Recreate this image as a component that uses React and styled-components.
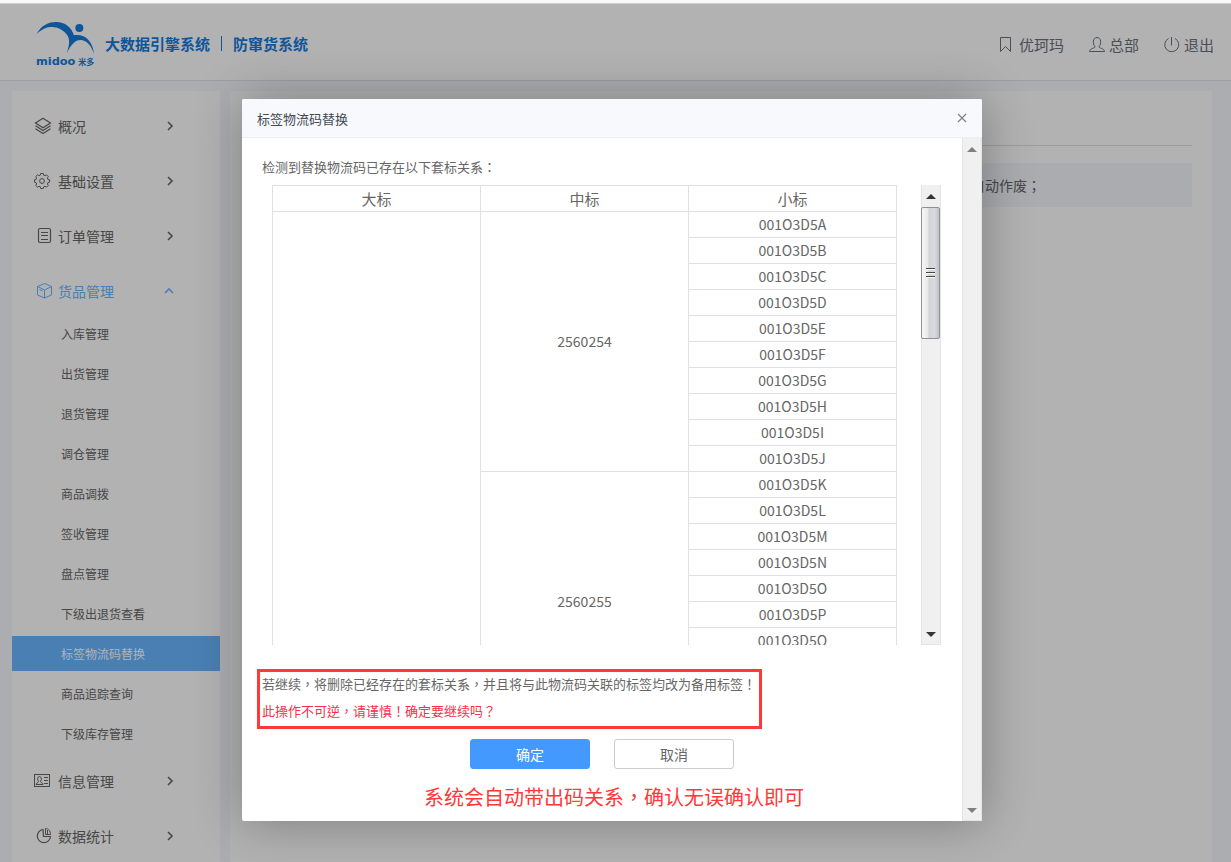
import React, { useState } from 'react';
import styled, { createGlobalStyle } from 'styled-components';

const colors = {
  text: '#666',
  dark: '#444b55',
  line: '#dde1e6',
  page: '#f6f8fd',
  blue: '#4499ff',
  active: '#69b6ff',
  brand: '#157add',
  red: '#ff3838'
};

const GlobalStyle = createGlobalStyle`
  * {
    box-sizing: border-box;
  }
  body {
    margin: 0;
    color: ${colors.text};
    font-family: 'Noto Sans CJK SC', sans-serif;
    font-size: 14px;
  }
  button {
    padding: 0;
    border: 0;
    background: none;
    color: inherit;
    font: inherit;
    cursor: pointer;
  }
  a {
    color: inherit;
    text-decoration: none;
  }
  ul {
    margin: 0;
    padding: 0;
    list-style: none;
  }
  p {
    margin: 0;
  }
  svg {
    display: block;
  }
`;

const Page = styled.div`
  display: flex;
  flex-direction: column;
  min-height: 100vh;
  background: #f8f8f8;
`;

const TopStrip = styled.div`
  height: 4px;
  border-bottom: 1px solid #cfcfcf;
`;

const Stage = styled.div`
  position: relative;
  display: flex;
  flex: 1;
  flex-direction: column;
  overflow: hidden;
  background: ${colors.page};
`;

const Header = styled.header`
  display: flex;
  align-items: center;
  height: 77px;
  padding: 3px 17px 0 36px;
  border-bottom: 1px solid #dfe1e6;
  background: #fff;
`;

const Brand = styled.h1`
  display: flex;
  align-items: center;
  gap: 10px;
  margin: 0;
  color: ${colors.brand};
  font-size: 15px;
  font-weight: 700;
  line-height: 20px;
`;

const BrandDivider = styled.span`
  width: 1px;
  height: 15px;
  margin: 0 1px;
  background: ${colors.brand};
`;

const UserNav = styled.nav`
  display: flex;
  gap: 24px;
  margin-left: auto;
  padding-top: 2px;
  color: #6b727c;
  font-size: 15px;
`;

const UserLink = styled.a`
  display: flex;
  align-items: center;
  gap: ${props => props.$gap}px;
  line-height: 24px;
`;

const Columns = styled.div`
  display: flex;
  flex: 1;
  gap: 10px;
  padding: 10px 19px 0 12px;
`;

const Sidebar = styled.nav`
  flex: 0 0 208px;
  padding-top: 17px;
  background: #fff;
`;

const Group = styled.li`
  padding-bottom: ${props => (props.$open ? 12 : 20)}px;

  &:last-child {
    padding-bottom: 0;
  }
`;

const GroupButton = styled.button`
  display: flex;
  align-items: center;
  width: 100%;
  height: 35px;
  padding: 0 46px 0 22px;
  color: ${props => (props.$open ? colors.active : colors.text)};
  text-align: left;

  > span {
    flex: 1;
    margin-left: 6px;
  }
`;

const SubList = styled.ul`
  display: flex;
  flex-direction: column;
  gap: 5px;
  padding-top: 8px;
`;

const SubLink = styled.a`
  display: block;
  padding-left: 49px;
  background: ${props => (props.$current ? colors.active : 'transparent')};
  color: ${props => (props.$current ? '#fff' : colors.text)};
  font-size: 12px;
  line-height: 35px;
`;

const Panel = styled.main`
  flex: 1;
  min-width: 0;
  padding: 0 20px;
  background: #fff;
`;

const PanelHead = styled.div`
  height: 55px;
  border-bottom: 1px solid ${colors.line};
`;

const Notice = styled.p`
  margin-top: 17px;
  padding-right: 151px;
  background: #f5f7fd;
  font-family: 'Noto Sans CJK TC', sans-serif;
  line-height: 44px;
  text-align: right;
`;

const Overlay = styled.div`
  position: absolute;
  inset: 0;
  display: flex;
  align-items: flex-start;
  justify-content: center;
  padding: 95px 7px 0 0;
  background: rgba(0, 0, 0, 0.3);
`;

const Dialog = styled.section`
  width: 740px;
  max-width: 100%;
  border-radius: 2px;
  background: #fff;
  box-shadow: 1px 1px 50px rgba(0, 0, 0, 0.3);
`;

const DialogHeader = styled.header`
  display: flex;
  align-items: center;
  justify-content: space-between;
  height: 39px;
  padding: 0 15px;
  border-bottom: 1px solid #eceef2;
  border-radius: 2px 2px 0 0;
  background: #f7f9fd;
  color: ${colors.dark};
`;

const DialogTitle = styled.h2`
  margin: 0;
  font-size: 13px;
  font-weight: 400;
`;

const DialogBody = styled.div`
  display: flex;
`;

const DialogContent = styled.div`
  flex: 1;
  min-width: 0;
  padding: 16px 0 10px;
`;

const Intro = styled.p`
  margin-bottom: 5px;
  padding-left: 20px;
  font-family: 'Noto Sans CJK TC', sans-serif;
  font-size: 13px;
  line-height: 26px;
`;

const TableArea = styled.div`
  display: flex;
  gap: 24px;
  height: 460px;
  margin: 0 21px 24px 30px;
`;

const TableScroller = styled.div`
  flex: 1;
  overflow-y: auto;
  scrollbar-width: none;
`;

const CodeTable = styled.table`
  width: 100%;
  border-top: 1px solid ${colors.line};
  border-left: 1px solid ${colors.line};
  border-collapse: separate;
  border-spacing: 0;
  table-layout: fixed;
  text-align: center;

  th,
  td {
    height: 26px;
    padding: 0;
    border-right: 1px solid ${colors.line};
    border-bottom: 1px solid ${colors.line};
    line-height: 25px;
  }
  th {
    font-size: 15px;
    font-weight: 400;
  }
`;

const ScrollTrack = styled.div`
  display: flex;
  flex: 0 0 20px;
  flex-direction: column;
  background: #f0f0f0;
  box-shadow: inset 1px 0 #e4e4e4, inset -1px -1px #e4e4e4;
`;

const ScrollArrow = styled.button`
  display: flex;
  align-items: center;
  justify-content: center;
  height: 22px;
  margin-top: ${props => (props.$down ? 'auto' : 0)};
  padding-right: 1px;
  opacity: ${props => (props.$muted ? 0.6 : 1)};

  &::before {
    content: '';
    border: solid transparent;
    border-width: ${props => (props.$down ? '5px 5px 0' : '0 5px 5px')};
    border-top-color: ${props => (props.$down ? '#333' : 'transparent')};
    border-bottom-color: ${props => (props.$down ? 'transparent' : '#333')};
  }
`;

const ScrollThumb = styled.div`
  display: flex;
  flex-direction: column;
  align-items: center;
  justify-content: center;
  gap: 2px;
  height: 132px;
  margin-right: 1px;
  border: 1px solid #8f8f94;
  border-radius: 2px;
  background: linear-gradient(90deg, #f7f7f7, #e9e9eb 35%, #d3d4d7 40%, #d9dadd 75%, #bfc0c3);

  span {
    width: 9px;
    height: 2px;
    border-top: 1px solid #444;
    background: #fafafa;
  }
`;

const Warning = styled.div`
  display: flex;
  flex-direction: column;
  gap: 4px;
  width: fit-content;
  margin-left: 15px;
  padding: 0 3px 4px 2px;
  border: 3px solid ${colors.red};
  font-family: 'Noto Sans CJK TC', sans-serif;
  font-size: 13px;
  line-height: 23px;

  strong {
    color: #f5304a;
    font-weight: 400;
  }
`;

const Actions = styled.div`
  display: flex;
  justify-content: center;
  gap: 24px;
  margin: 10px 0 14px;
`;

const ActionButton = styled.button`
  width: 120px;
  height: 30px;
  border: 1px solid ${props => (props.$primary ? colors.blue : '#ccc')};
  border-radius: 3px;
  background: ${props => (props.$primary ? colors.blue : '#fff')};
  color: ${props => (props.$primary ? '#fff' : colors.text)};
`;

const Caption = styled.p`
  padding-left: 24px;
  color: ${colors.red};
  font-family: 'Noto Sans CJK TC', sans-serif;
  font-size: 20px;
  line-height: 28px;
  text-align: center;
`;

const Icon = ({ children }) => (
  <svg width='18' height='18' viewBox='0 0 18 18' fill='none' stroke='currentColor' aria-hidden='true'>
    {children}
  </svg>
);

const icons = {
  layers: (
    <Icon>
      <path strokeWidth='1.2' d='M9 1.2 16.500 6 9 10.800 1.500 6Z' />
      <path strokeWidth='1.2' d='M1.500 8.800 9 13.600l7.500-4.800M1.500 11.800 9 16.600l7.500-4.800' />
    </Icon>
  ),
  gear: (
    <Icon>
      <path d='M6.4 3.1 6.7 1.5h2.6l.3 1.6 1.5.6 1.4-.9 1.8 1.8-.9 1.4.6 1.5 1.6.3v2.4l-1.6.3-.6 1.5.9 1.4-1.8 1.8-1.4-.9-1.5.6-.3 1.6H6.7l-.3-1.6-1.5-.6-1.4.9-1.8-1.8.9-1.4L2 10.5l-1.5-.3V7.8L2 7.5 2.6 6l-.9-1.4 1.8-1.8 1.4.9Z' />
      <circle cx='8' cy='9' r='2.4' />
    </Icon>
  ),
  order: (
    <Icon>
      <rect x='4.5' y='1.5' width='12' height='14' rx='1.5' strokeWidth='1.2' />
      <path d='M7 5.5h7M7 8.5h7M7 12.5h7' />
    </Icon>
  ),
  goods: (
    <Icon>
      <path d='M10.500 1.500 17.500 4.500v8.500l-7 3-7-3V4.500ZM3.500 4.500l7 3.500 7-3.500M10.500 8v8M5.500 7.500l3 1.500' />
    </Icon>
  ),
  info: (
    <Icon>
      <rect x='.5' y='2.5' width='15' height='12' />
      <path d='M10 5.5h4M10 8.5h4M10 11.5h4M2 12.5c0-2 2.5-1.5 2.5-3C3 7.5 3.5 4.5 5.5 4.5s2.5 3 1 5c0 1.5 2.5 1 2.5 3Z' />
    </Icon>
  ),
  stats: (
    <Icon>
      <path strokeWidth='1.2' d='M9 2.500a6.600 6.600 0 1 0 7.500 7H9.500Z' />
      <path d='M11.500 1.500v6h5c0-3.500-2-6-5-6ZM13.500 3v4' />
    </Icon>
  ),
  bookmark: (
    <Icon>
      <path d='M4.5 1.5h10v14l-5-5-5 5Z' />
    </Icon>
  ),
  user: (
    <Icon>
      <path d='M7 10.5C4.5 8 4.5 1.5 9 1.5s4.5 6.5 2 9c-.5 2 5.5 1.5 5.500 5h-15c0-3.500 6-3 5.500-5Z' />
    </Icon>
  ),
  power: (
    <Icon>
      <path d='M8.500 1v8.500M5.500 2.500a7 7 0 1 0 6.500 0' />
    </Icon>
  )
};

const Chevron = ({ up }) => (
  <svg width='10' height='10' viewBox='0 0 10 10' fill='none' stroke='currentColor' strokeWidth='1.6' aria-hidden='true'>
    <path d={up ? 'M1 7l4-4 4 4' : 'M4 1l4 4-4 4'} />
  </svg>
);

const Logo = () => (
  <svg width='59' height='46' viewBox='0 0 177 138' fill={colors.brand} role='img' aria-label='midoo 米多'>
    <path d='M2 39C16 12 38 3 60 3c28 0 46 16 54 40 32-5 56 16 60 56-8-27-24-42-40-42-18 0-28 14-42 40 9-26 11-44-1-58C74 20 40 4 2 39Z' />
    <circle cx='130' cy='21' r='12' />
    <text x='0' y='132' fontFamily='DejaVu Sans, sans-serif' fontSize='34' fontWeight='700'>midoo</text>
    <text x='127' y='132' fontFamily='Noto Sans CJK SC, sans-serif' fontSize='24' fontWeight='700'>米多</text>
  </svg>
);

const menu = [
  { name: '概况', icon: 'layers' },
  { name: '基础设置', icon: 'gear' },
  { name: '订单管理', icon: 'order' },
  {
    name: '货品管理',
    icon: 'goods',
    children: [
      '入库管理',
      '出货管理',
      '退货管理',
      '调仓管理',
      '商品调拨',
      '签收管理',
      '盘点管理',
      '下级出退货查看',
      '标签物流码替换',
      '商品追踪查询',
      '下级库存管理'
    ]
  },
  { name: '信息管理', icon: 'info' },
  { name: '数据统计', icon: 'stats' }
];

const boxes = [
  { code: '2560254', items: 'ABCDEFGHIJ'.split('') },
  { code: '2560255', items: 'KLMNOPQRST'.split('') }
];

const total = boxes.reduce((sum, box) => sum + box.items.length, 0);

const RelationTable = () => (
  <CodeTable>
    <thead>
      <tr>
        <th scope='col'>大标</th>
        <th scope='col'>中标</th>
        <th scope='col'>小标</th>
      </tr>
    </thead>
    <tbody>
      {boxes.map((box, b) =>
        box.items.map((item, i) => (
          <tr key={item}>
            {b === 0 && i === 0 && <td rowSpan={total} />}
            {i === 0 && <td rowSpan={box.items.length}>{box.code}</td>}
            <td>001O3D5{item}</td>
          </tr>
        ))
      )}
    </tbody>
  </CodeTable>
);

const ReplaceDialog = ({ onClose }) => (
  <Overlay>
    <Dialog role='dialog' aria-labelledby='dialog-title'>
      <DialogHeader>
        <DialogTitle id='dialog-title'>标签物流码替换</DialogTitle>
        <button type='button' aria-label='关闭' onClick={onClose}>
          <svg width='10' height='10' viewBox='0 0 10 10' stroke='#7c838c' strokeWidth='1.2'>
            <path d='M1 1l8 8M9 1 1 9' />
          </svg>
        </button>
      </DialogHeader>
      <DialogBody>
        <DialogContent>
          <Intro>检测到替换物流码已存在以下套标关系：</Intro>
          <TableArea>
            <TableScroller>
              <RelationTable />
            </TableScroller>
            <ScrollTrack>
              <ScrollArrow type='button' aria-label='向上滚动' />
              <ScrollThumb>
                <span />
                <span />
                <span />
              </ScrollThumb>
              <ScrollArrow type='button' aria-label='向下滚动' $down />
            </ScrollTrack>
          </TableArea>
          <Warning>
            <p>若继续，将删除已经存在的套标关系，并且将与此物流码关联的标签均改为备用标签！</p>
            <strong>此操作不可逆，请谨慎！确定要继续吗？</strong>
          </Warning>
          <Actions>
            <ActionButton type='button' $primary onClick={onClose}>确定</ActionButton>
            <ActionButton type='button' onClick={onClose}>取消</ActionButton>
          </Actions>
          <Caption>系统会自动带出码关系，确认无误确认即可</Caption>
        </DialogContent>
        <ScrollTrack>
          <ScrollArrow type='button' aria-label='向上滚动' $muted />
          <ScrollArrow type='button' aria-label='向下滚动' $down $muted />
        </ScrollTrack>
      </DialogBody>
    </Dialog>
  </Overlay>
);

const App = () => {
  const [open, setOpen] = useState('货品管理');
  const [dialog, setDialog] = useState(true);

  return (
    <Page>
      <GlobalStyle />
      <TopStrip />
      <Stage>
        <Header>
          <Brand>
            <Logo />
            <span>大数据引擎系统</span>
            <BrandDivider />
            <span>防窜货系统</span>
          </Brand>
          <UserNav>
            <UserLink href='#shop' $gap={5}>{icons.bookmark}优珂玛</UserLink>
            <UserLink href='#account' $gap={3}>{icons.user}总部</UserLink>
            <UserLink href='#logout' $gap={3}>{icons.power}退出</UserLink>
          </UserNav>
        </Header>

        <Columns>
          <Sidebar>
            <ul>
              {menu.map(({ name, icon, children }) => {
                const isOpen = Boolean(children) && open === name;
                return (
                  <Group key={name} $open={isOpen}>
                    <GroupButton
                      type='button'
                      $open={isOpen}
                      aria-expanded={isOpen}
                      onClick={() => setOpen(isOpen ? '' : name)}
                    >
                      {icons[icon]}
                      <span>{name}</span>
                      <Chevron up={isOpen} />
                    </GroupButton>
                    {isOpen && (
                      <SubList>
                        {children.map(child => (
                          <li key={child}>
                            <SubLink href='#menu' $current={child === '标签物流码替换'}>
                              {child}
                            </SubLink>
                          </li>
                        ))}
                      </SubList>
                    )}
                  </Group>
                );
              })}
            </ul>
          </Sidebar>
          <Panel>
            <PanelHead />
            <Notice>自动作废；</Notice>
          </Panel>
        </Columns>

        {dialog && <ReplaceDialog onClose={() => setDialog(false)} />}
      </Stage>
    </Page>
  );
};

export default App;
